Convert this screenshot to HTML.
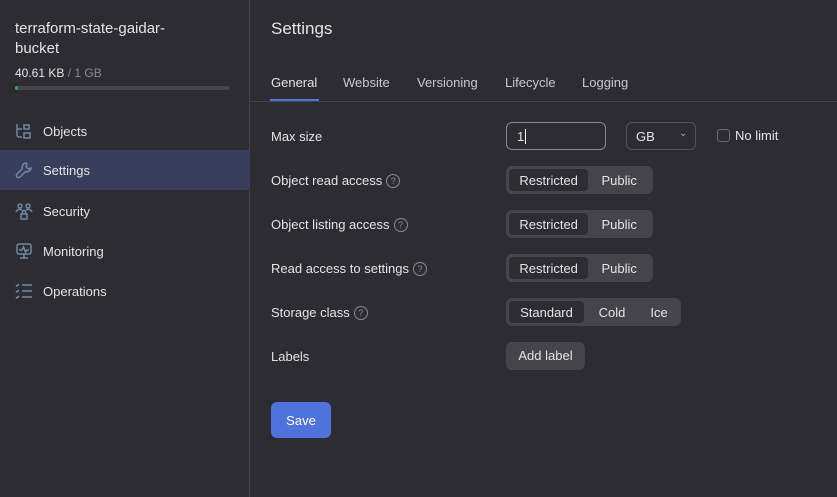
<!DOCTYPE html><html><head><style>
*{box-sizing:border-box;margin:0;padding:0}
body{width:837px;height:497px;background:#2d2c33;font-family:"Liberation Sans",sans-serif;color:#e4e4e6;font-size:13px;position:relative;overflow:hidden}
.a{position:absolute;white-space:nowrap}
.side{left:0;top:0;width:250px;height:497px;border-right:1px solid #45444b}
.nav{left:0;width:250px;height:40px;display:flex;align-items:center;padding-left:15px;font-size:13px}
.nav svg{width:18px;height:18px;margin-right:10px;stroke:#6e8aa3;fill:none;stroke-width:1.5}
.seg{height:28px;background:#45444b;border-radius:6px;display:flex;padding:3px}
.seg div{display:flex;align-items:center;justify-content:center;border-radius:4px;font-size:13px}
.seg .on{background:#2d2c33}
.q{display:inline-block;width:14px;height:14px;border:1px solid #8a898f;border-radius:50%;color:#8a898f;font-size:9px;text-align:center;line-height:12px;margin-left:4px;position:relative;top:1px}
.lbl{left:271px;font-size:13px;display:flex;align-items:center;height:16px}
</style></head><body>
<div class="a side"></div>
<div class="a" style="left:15px;top:19px;font-size:15px;line-height:20px">terraform-state-gaidar-<br>bucket</div>
<div class="a" style="left:15px;top:66px;font-size:12px">40.61 KB <span style="color:#8a898f">/ 1 GB</span></div>
<div class="a" style="left:15px;top:86px;width:215px;height:4px;background:#45444b;border-radius:2px"><div style="width:3px;height:4px;background:#3ea04a;border-radius:2px"></div></div>
<div class="a nav" style="top:111px"><svg viewBox="0 0 18 18"><path d="M2 2v11a2 2 0 0 0 2 2h3M2 7h5M9 3h5v4H9zM9 11h6v5H9z"/></svg>Objects</div>
<div class="a nav" style="top:150px;background:#383e5b"><svg viewBox="0 0 18 18"><path d="M11 2a4 4 0 0 0-3.5 5.5L2 13a1.5 1.5 0 0 0 3 3l5.5-5.5A4 4 0 0 0 16 7l-2.5 1L11 5.5 12 3z"/></svg>Settings</div>
<div class="a nav" style="top:191px"><svg viewBox="0 0 18 18"><circle cx="5" cy="4" r="2"/><circle cx="13" cy="4" r="2"/><path d="M1 10a4 4 0 0 1 6-2M17 10a4 4 0 0 0-6-2M6 12h6v5H6zM7.5 12v-2a1.5 1.5 0 0 1 3 0v2"/></svg>Security</div>
<div class="a nav" style="top:231px"><svg viewBox="0 0 18 18"><rect x="2" y="2" width="14" height="10" rx="2"/><path d="M4 8h3l1.5-3 2 5 1.5-2h2M9 12v4M5 16h8"/></svg>Monitoring</div>
<div class="a nav" style="top:271px"><svg viewBox="0 0 18 18"><path d="M1 3l1 1 2-2M1 9l1 1 2-2M1 15l1 1 2-2M7 3h10M7 9h10M7 15h10"/></svg>Operations</div>

<div class="a" style="left:271px;top:19px;font-size:17px">Settings</div>
<div class="a" style="left:250px;top:101px;width:587px;height:1px;background:#45444b"></div>
<div class="a" style="left:271px;top:75px;font-size:13px;color:#e4e4e6">General</div>
<div class="a" style="left:270px;top:99px;width:49px;height:2px;background:#4f73dd"></div>
<div class="a" style="left:343px;top:75px;color:#c8c8cc">Website</div>
<div class="a" style="left:417px;top:75px;color:#c8c8cc">Versioning</div>
<div class="a" style="left:505px;top:75px;color:#c8c8cc">Lifecycle</div>
<div class="a" style="left:582px;top:75px;color:#c8c8cc">Logging</div>

<div class="a lbl" style="top:128px">Max size</div>
<div class="a" style="left:506px;top:122px;width:100px;height:28px;border:1px solid #8a898f;border-radius:6px;padding:6px 10px">1<span style="border-left:1px solid #fff;margin-left:1px"></span></div>
<div class="a" style="left:626px;top:122px;width:70px;height:28px;border:1px solid #55545a;border-radius:6px;padding:6px 9px">GB<span style="position:absolute;left:52px;top:5px;font-size:10px;color:#aaa">&#8964;</span></div>
<div class="a" style="left:717px;top:129px;width:13px;height:13px;border:1px solid #6a696f;border-radius:3px"></div>
<div class="a" style="left:735px;top:128px">No limit</div>

<div class="a lbl" style="top:172px">Object read access<span class="q">?</span></div>
<div class="a seg" style="left:506px;top:166px;width:147px"><div class="on" style="width:81px">Restricted</div><div style="width:63px">Public</div></div>
<div class="a lbl" style="top:216px">Object listing access<span class="q">?</span></div>
<div class="a seg" style="left:506px;top:210px;width:147px"><div class="on" style="width:81px">Restricted</div><div style="width:63px">Public</div></div>
<div class="a lbl" style="top:260px">Read access to settings<span class="q">?</span></div>
<div class="a seg" style="left:506px;top:254px;width:147px"><div class="on" style="width:81px">Restricted</div><div style="width:63px">Public</div></div>
<div class="a lbl" style="top:304px">Storage class<span class="q">?</span></div>
<div class="a seg" style="left:506px;top:298px;width:175px"><div class="on" style="width:75px">Standard</div><div style="width:56px">Cold</div><div style="width:38px">Ice</div></div>
<div class="a lbl" style="top:348px">Labels</div>
<div class="a" style="left:506px;top:342px;width:79px;height:28px;background:#45444b;border-radius:6px;text-align:center;line-height:28px">Add label</div>
<div class="a" style="left:271px;top:402px;width:60px;height:36px;background:#4f73dd;border-radius:6px;text-align:center;line-height:37px;color:#fff">Save</div>
</body></html>
